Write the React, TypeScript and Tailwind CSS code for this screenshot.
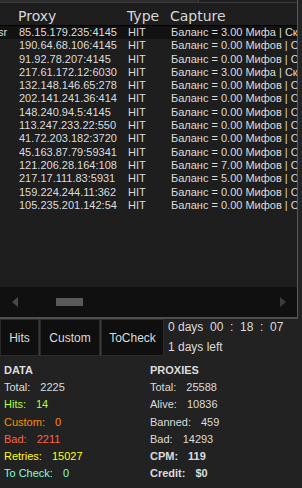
import React from "react";

type Row = { ip: string; cap: string; first?: boolean };

const rows: Row[] = [
  { ip: "85.15.179.235:4145", cap: "Баланс = 3.00 Мифа | Скидка", first: true },
  { ip: "190.64.68.106:4145", cap: "Баланс = 0.00 Мифов | Скидка" },
  { ip: "91.92.78.207:4145", cap: "Баланс = 0.00 Мифов | Скидка" },
  { ip: "217.61.172.12:6030", cap: "Баланс = 3.00 Мифа | Скидка" },
  { ip: "132.148.146.65:278", cap: "Баланс = 0.00 Мифов | Скидка" },
  { ip: "202.141.241.36:414", cap: "Баланс = 0.00 Мифов | Скидка" },
  { ip: "148.240.94.5:4145", cap: "Баланс = 0.00 Мифов | Скидка" },
  { ip: "113.247.233.22:550", cap: "Баланс = 0.00 Мифов | Скидка" },
  { ip: "41.72.203.182:3720", cap: "Баланс = 0.00 Мифов | Скидка" },
  { ip: "45.163.87.79:59341", cap: "Баланс = 0.00 Мифов | Скидка" },
  { ip: "121.206.28.164:108", cap: "Баланс = 7.00 Мифов | Скидка" },
  { ip: "217.17.111.83:5931", cap: "Баланс = 5.00 Мифов | Скидка" },
  { ip: "159.224.244.11:362", cap: "Баланс = 0.00 Мифов | Скидка" },
  { ip: "105.235.201.142:54", cap: "Баланс = 0.00 Мифов | Скидка" },
];

function Stat({ label, value, color, bold }: { label: string; value: string; color: string; bold?: boolean }) {
  return (
    <div className={`flex whitespace-nowrap leading-[17.3px] ${color} ${bold ? "font-bold" : ""}`}>
      <span>{label}</span>
      <span className="ml-[10px]">{value}</span>
    </div>
  );
}

export default function App() {
  return (
    <div className="w-[302px] h-[488px] overflow-hidden bg-[#222222] text-[#dcdcdc] font-['Liberation_Sans',Arial,sans-serif] text-[11px]">
      <div className="flex">
        <div className="w-[298px] h-[319px] flex flex-col border-r border-r-[#5a5a5a] border-b-2 border-b-[#4e4e4e]">
          <div className="h-[3px] flex border-b border-b-[#3a3a3a]">
            <div className="w-[199px] bg-[#2c2c2c] border-r border-r-[#444444]" />
            <div className="flex-1 bg-[#1e1e1e]" />
          </div>
          <div className="h-[23px] pt-[4px] flex bg-[#1e1e1e] border-b border-b-black font-['DejaVu_Sans',sans-serif] text-[14px] leading-[18px] text-[#d8d8d8] whitespace-nowrap overflow-hidden">
            <div className="w-[18px] shrink-0" />
            <div className="w-[109px] shrink-0">Proxy</div>
            <div className="w-[43px] shrink-0">Type</div>
            <div className="flex-1">Capture</div>
          </div>
          <div className="flex-1 bg-[#1e1e1e] overflow-hidden">
            {rows.map((r, i) => (
              <div
                key={i}
                className={`h-[13.3px] leading-[13.3px] flex whitespace-nowrap overflow-hidden ${r.first ? "bg-[#121212]" : ""}`}
              >
                <div className="w-[18px] shrink-0 overflow-hidden">
                  {r.first ? <span className="block -ml-[2px]">sr</span> : null}
                </div>
                <div className="w-[109px] shrink-0 overflow-hidden pl-[1px]">{r.ip}</div>
                <div className="w-[43px] shrink-0 overflow-hidden pl-[1px]">HIT</div>
                <div className="flex-1 overflow-hidden pl-[1px]">{r.cap}</div>
              </div>
            ))}
          </div>
          <div className="h-[30px] bg-[#101010] flex items-center">
            <svg className="ml-[12px]" width="6" height="10" viewBox="0 0 6 10">
              <path d="M6 0 L0 5 L6 10 Z" fill="#4a4a4a" />
            </svg>
            <div className="ml-[38px] w-[27px] h-[8px] bg-[#595959]" />
            <svg className="ml-auto mr-[11px]" width="6" height="10" viewBox="0 0 6 10">
              <path d="M0 0 L6 5 L0 10 Z" fill="#3c3c3c" />
            </svg>
          </div>
        </div>
        <div className="flex-1 bg-[#242424]" />
      </div>

      <div className="flex h-[37px]">
        <div className="flex gap-[1px] bg-[#3a3a3a] text-[12px] text-[#dcdcdc]">
          <div className="w-[39px] bg-[#0f0f0f] border border-[#2b2b2b] flex items-center justify-center">Hits</div>
          <div className="w-[60px] bg-[#0f0f0f] border border-[#2b2b2b] flex items-center justify-center">Custom</div>
          <div className="w-[63px] bg-[#0f0f0f] border border-[#2b2b2b] flex items-center justify-center">ToCheck</div>
        </div>
        <div className="ml-[4px] -mt-[2px] text-[12px] leading-[20px] whitespace-pre">
          <div>{"0 days  00  :  18  :  07"}</div>
          <div>1 days left</div>
        </div>
      </div>

      <div className="flex pt-[6px]">
        <div className="w-[150px] pl-[4px]">
          <div className="font-bold leading-[17px]">DATA</div>
          <Stat label="Total:" value="2225" color="text-[#dcdcdc]" />
          <Stat label="Hits:" value="14" color="text-[#adff2f]" />
          <Stat label="Custom:" value="0" color="text-[#ff8c00]" />
          <Stat label="Bad:" value="2211" color="text-[#ff6347]" />
          <Stat label="Retries:" value="15027" color="text-[#ffff00]" />
          <Stat label="To Check:" value="0" color="text-[#7fffd4]" />
        </div>
        <div className="flex-1">
          <div className="font-bold leading-[17px]">PROXIES</div>
          <Stat label="Total:" value="25588" color="text-[#dcdcdc]" />
          <Stat label="Alive:" value="10836" color="text-[#dcdcdc]" />
          <Stat label="Banned:" value="459" color="text-[#dcdcdc]" />
          <Stat label="Bad:" value="14293" color="text-[#dcdcdc]" />
          <Stat label="CPM:" value="119" color="text-[#dcdcdc]" bold />
          <Stat label="Credit:" value="$0" color="text-[#dcdcdc]" bold />
        </div>
      </div>
    </div>
  );
}
